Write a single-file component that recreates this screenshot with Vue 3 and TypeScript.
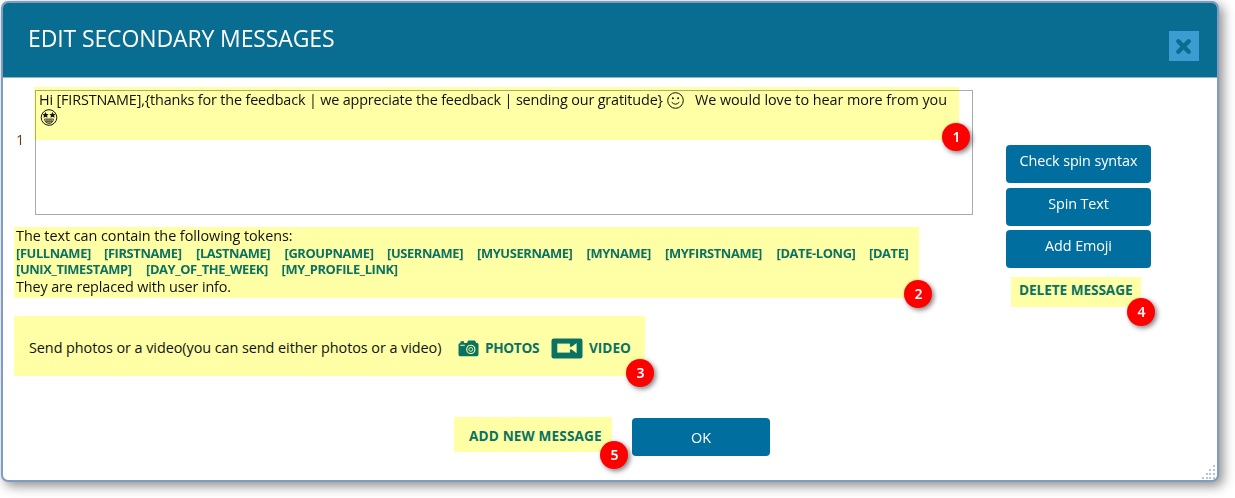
<script setup lang="ts">
interface Token {
  name: string
  width: number
}

const tokenRows: Token[][] = [
  [
    { name: 'FULLNAME', width: 88 },
    { name: 'FIRSTNAME', width: 92 },
    { name: 'LASTNAME', width: 88.5 },
    { name: 'GROUPNAME', width: 102.5 },
    { name: 'USERNAME', width: 90 },
    { name: 'MYUSERNAME', width: 109.5 },
    { name: 'MYNAME', width: 78.5 },
    { name: 'MYFIRSTNAME', width: 111.5 },
    { name: 'DATE-LONG', width: 92.5 },
    { name: 'DATE', width: 40 },
  ],
  [
    { name: 'UNIX_TIMESTAMP', width: 130 },
    { name: 'DAY_OF_THE_WEEK', width: 135.5 },
    { name: 'MY_PROFILE_LINK', width: 118 },
  ],
]

const actions: string[] = ['Check spin syntax', 'Spin Text', 'Add Emoji']
</script>

<template>
  <div class="dialog">
    <header class="header">
      <h1 class="title">EDIT SECONDARY MESSAGES</h1>
      <button class="close" aria-label="Close">
        <svg width="30" height="30" viewBox="0 0 30 30">
          <path d="M9.3 10.3L19.7 20.7M19.7 10.3L9.3 20.7" stroke="#0b6c90" stroke-width="4.4" stroke-linecap="round" />
        </svg>
      </button>
    </header>

    <div class="body">
      <main class="left">
        <div class="editor">
          <span class="index">1</span>
          <div class="box">
            <div class="mark"></div>
            <div class="line">
              <span class="t-a">Hi [FIRSTNAME],{thanks for the feedback | we appreciate the feedback | sending our gratitude}</span>
              <svg class="smile" width="17" height="17" viewBox="0 0 17 17" fill="none" stroke="#111">
                <circle cx="8.5" cy="8.5" r="7.8" />
                <path d="M4.7 10.2Q8.5 14.2 12.3 10.2" />
                <circle cx="5.9" cy="6.3" r="1" fill="#111" stroke="none" />
                <circle cx="11.1" cy="6.3" r="1" fill="#111" stroke="none" />
              </svg>
              <span class="t-b">We would love to hear more from you</span>
            </div>
            <svg class="starry" width="18" height="17" viewBox="0 0 18 17">
              <circle cx="9" cy="8.5" r="7.8" fill="none" stroke="#111" />
              <path d="M5.5 2.9L6.5 5L8.6 5.2L7.1 6.6L7.5 8.7L5.5 7.7L3.5 8.7L3.9 6.6L2.4 5.2L4.5 5Z" fill="#111" />
              <path d="M12.5 2.9L13.5 5L15.6 5.2L14.1 6.6L14.5 8.7L12.5 7.7L10.5 8.7L10.9 6.6L9.4 5.2L11.5 5Z" fill="#111" />
              <path d="M4.5 10H13.5Q13 14.4 9 14.4Q5 14.4 4.5 10ZM5 12.2H13M7 10V14M9 10V14.4M11 10V14" fill="none" stroke="#222" stroke-width=".8" />
            </svg>
            <span class="badge b1">1</span>
          </div>
        </div>

        <section class="tokens">
          <p class="note n1">The text can contain the following tokens:</p>
          <div v-for="(row, i) in tokenRows" :key="i" class="token-row">
            <a v-for="t in row" :key="t.name" class="token" :style="{ width: t.width + 'px' }">[{{ t.name }}]</a>
          </div>
          <p class="note n2">They are replaced with user info.</p>
          <span class="badge b2">2</span>
        </section>

        <section class="media">
          <span class="media-text">Send photos or a video(you can send either photos or a video)</span>
          <a class="link photos">
            <svg width="21" height="17" viewBox="0 0 21 17">
              <path d="M2.5 1.2H6V3H9L10.2 .6H17L18.3 3H19.3Q20.5 3 20.5 4.5V14.6Q20.5 16.2 19 16.2H2Q.5 16.2 .5 14.6V4.6Q.5 3 2.5 3Z" fill="#0a7262" />
              <path d="M2.3 5.3H6.8" stroke="#ffffa6" stroke-width="1" />
              <circle cx="12.8" cy="9.4" r="4.1" fill="none" stroke="#ffffa6" stroke-width="1.1" />
              <circle cx="12.8" cy="9.4" r="1.9" fill="none" stroke="#ffffa6" stroke-width=".9" />
            </svg>
            <span>PHOTOS</span>
          </a>
          <a class="link video">
            <svg width="32" height="21" viewBox="0 0 32 21">
              <rect x=".5" y=".5" width="31" height="20" rx="2.2" fill="#0a7262" />
              <rect x="6.3" y="5.6" width="12.6" height="9" fill="#ffffa6" />
              <path d="M19 8.8H20.8L25.6 5V15.2L20.8 11.4H19Z" fill="#ffffa6" />
            </svg>
            <span>VIDEO</span>
          </a>
          <span class="badge b3">3</span>
        </section>
      </main>

      <aside class="side">
        <button v-for="a in actions" :key="a" class="btn">{{ a }}</button>
        <a class="link delete">DELETE MESSAGE<span class="badge b4">4</span></a>
      </aside>
    </div>

    <footer class="footer">
      <a class="link add">ADD NEW MESSAGE<span class="badge b5">5</span></a>
      <button class="btn ok">OK</button>
    </footer>

    <svg class="grip" width="14" height="15" viewBox="0 0 14 15" fill="#b9c4dc">
      <path d="M11 0h2v2h-2zM11 4h2v2h-2zM7 4h2v2h-2zM11 8h2v2h-2zM7 8h2v2h-2zM4 8h2v2h-2zM11 12h2v2h-2zM7 12h2v2h-2zM4 12h2v2h-2zM0 12h2v2h-2z" />
    </svg>
  </div>
</template>

<style>
html { background: #fff; }
#app { display: flow-root; height: 498px; overflow: hidden; }
</style>

<style scoped>
* { box-sizing: border-box; }
.dialog {
  position: relative;
  width: 1218px;
  height: 481px;
  margin: 1px 0 0 1px;
  border: 2px solid #7f9dc0;
  border-radius: 7px;
  background: #fff;
  box-shadow: 4px 4px 12px rgba(0, 0, 0, .45);
  font-family: "Open Sans", "Noto Sans", sans-serif;
  font-size: 14.4px;
  color: #111;
  white-space: nowrap;
}
button { border: 0; padding: 0; font: inherit; }
.header {
  display: flex;
  justify-content: space-between;
  align-items: flex-start;
  height: 75px;
  padding: 0 18px 0 25px;
  background: #086d91;
  border-bottom: 1px solid #8ab8ca;
  border-radius: 5px 5px 0 0;
}
.title {
  margin: 19px 0 0;
  font-size: 23px;
  line-height: 32px;
  font-weight: 400;
  letter-spacing: -.12px;
  color: #fff;
}
.close { width: 30px; height: 30px; margin-top: 28px; background: #3a9cd0; }
.close svg { display: block; }
.body { display: flex; height: 339px; }
.left { width: 1003px; padding: 12px 0 0 11px; }
.editor { display: flex; height: 125px; }
.index { width: 21px; padding: 40px 0 0 2px; line-height: 20px; color: #7a3b10; }
.box { position: relative; width: 938px; border: 1px solid #ababab; padding: 0 0 0 3px; }
.mark {
  position: absolute;
  left: -2px;
  top: -4px;
  width: 925px;
  height: 53px;
  background: #ffffa6;
  mix-blend-mode: multiply;
}
.line { position: relative; display: flex; align-items: center; height: 18px; }
.t-a { width: 628px; padding-bottom: 2px; letter-spacing: -.157px; }
.smile { flex: none; margin-right: 11px; }
.t-b { padding-bottom: 2px; letter-spacing: -.06px; }
.starry { position: relative; display: block; margin-left: 1px; }
.tokens {
  position: relative;
  width: 905px;
  height: 71px;
  margin-top: 12px;
  background: #ffffa6;
  padding-left: 2px;
}
.note { margin: 0; height: 17px; line-height: 17px; }
.n1 { height: 18px; letter-spacing: -.05px; }
.n2 { margin-top: 1px; letter-spacing: -.12px; }
.token-row { display: flex; height: 16px; }
.token { flex: none; font-size: 12.9px; font-weight: 700; line-height: 16px; letter-spacing: -.38px; color: #0a7262; }
.media {
  position: relative;
  display: flex;
  align-items: center;
  width: 631px;
  height: 60px;
  margin-top: 18px;
  padding: 4px 0 0 15px;
  background: #ffffa6;
}
.media-text { width: 429px; padding-bottom: 2px; letter-spacing: -.05px; }
.link { display: flex; align-items: center; font-size: 13.6px; font-weight: 700; letter-spacing: -.3px; color: #0a7262; }
.photos span, .video span { padding-bottom: 2px; }
.photos { width: 93px; gap: 6px; }
.video { gap: 6px; letter-spacing: 0; }
.side { width: 145px; padding-top: 67px; }
.btn {
  display: block;
  width: 145px;
  height: 38px;
  margin-bottom: 4.7px;
  padding-bottom: 6px;
  border-radius: 4px;
  background: #006f9f;
  color: #fff;
  line-height: 32px;
  letter-spacing: -.1px;
}
.delete {
  position: relative;
  width: 130px;
  height: 30px;
  margin: 9px 0 0 5px;
  padding: 0 0 5px 8px;
  background: #ffffa6;
  letter-spacing: -.05px;
}
.footer { display: flex; padding-left: 451px; }
.add { position: relative; width: 158px; height: 35px; padding: 2px 0 0 15px; background: #ffffa6; letter-spacing: .15px; }
.ok { width: 138px; margin: 1px 0 0 20px; padding: 0; line-height: 40px; }
.badge {
  position: absolute;
  width: 28px;
  height: 28px;
  border-radius: 50%;
  background: #f00;
  box-shadow: 2px 2px 5px rgba(0, 0, 0, .5);
  color: #fff;
  font: 600 14px/27px "Noto Sans", sans-serif;
  text-align: center;
  letter-spacing: 0;
}
.b1 { left: 906.4px; top: 32.4px; }
.b2 { left: 890.4px; top: 53.4px; }
.b3 { left: 612.4px; top: 43.4px; }
.b4 { left: 116.4px; top: 20.4px; }
.b5 { left: 146.4px; top: 24.4px; }
.grip { position: absolute; right: 1px; bottom: 0; }
</style>
